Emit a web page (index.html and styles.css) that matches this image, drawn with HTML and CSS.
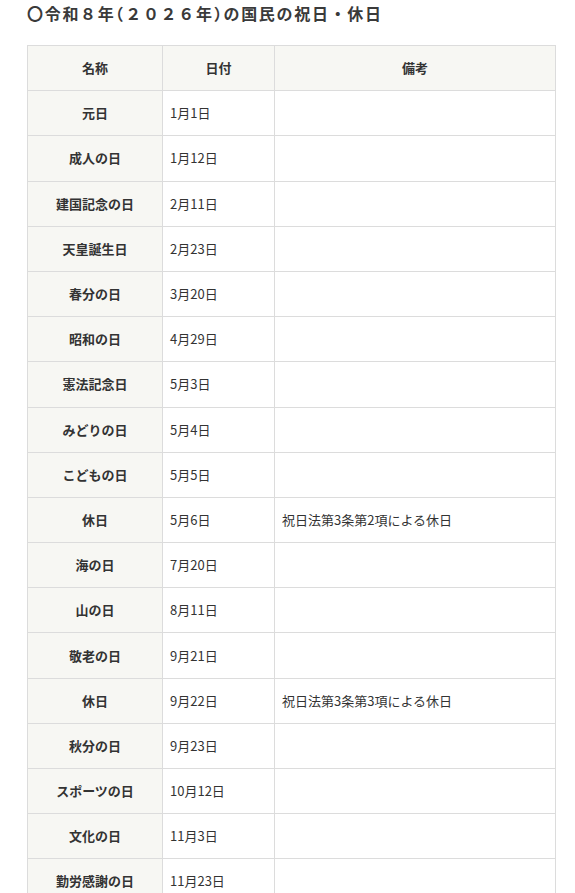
FILE: index.html
```html
<!DOCTYPE html>
<html lang="ja">
<head>
<meta charset="utf-8">
<link rel="stylesheet" href="styles.css">
</head>
<body>
<div class="page">
<h2 class="title">〇令和８年<span class="paren">（</span>２０２６年<span class="paren">）</span>の国民の祝日・休日</h2>
<table class="holidays">
<colgroup><col class="c-name"><col class="c-date"><col class="c-note"></colgroup>
<thead>
<tr><th>名称</th><th>日付</th><th>備考</th></tr>
</thead>
<tbody>
<tr><th>元日</th><td>1月1日</td><td></td></tr>
<tr><th>成人の日</th><td>1月12日</td><td></td></tr>
<tr><th>建国記念の日</th><td>2月11日</td><td></td></tr>
<tr><th>天皇誕生日</th><td>2月23日</td><td></td></tr>
<tr><th>春分の日</th><td>3月20日</td><td></td></tr>
<tr><th>昭和の日</th><td>4月29日</td><td></td></tr>
<tr><th>憲法記念日</th><td>5月3日</td><td></td></tr>
<tr><th>みどりの日</th><td>5月4日</td><td></td></tr>
<tr><th>こどもの日</th><td>5月5日</td><td></td></tr>
<tr><th>休日</th><td>5月6日</td><td>祝日法第3条第2項による休日</td></tr>
<tr><th>海の日</th><td>7月20日</td><td></td></tr>
<tr><th>山の日</th><td>8月11日</td><td></td></tr>
<tr><th>敬老の日</th><td>9月21日</td><td></td></tr>
<tr><th>休日</th><td>9月22日</td><td>祝日法第3条第3項による休日</td></tr>
<tr><th>秋分の日</th><td>9月23日</td><td></td></tr>
<tr><th>スポーツの日</th><td>10月12日</td><td></td></tr>
<tr><th>文化の日</th><td>11月3日</td><td></td></tr>
<tr><th>勤労感謝の日</th><td>11月23日</td><td></td></tr>
</tbody>
</table>
</div>
</body>
</html>
```

FILE: styles.css
```css
html, body {
  margin: 0;
  padding: 0;
  background: #fff;
}
body {
  font-family: "Noto Sans CJK JP", "Noto Sans", sans-serif;
  color: #333;
}
.page {
  padding: 0 20px 0 27px;
}
.title {
  margin: 0;
  padding-top: 3px;
  height: 45px;
  box-sizing: border-box;
  font-size: 16px;
  line-height: 20px;
  font-weight: bold;
  letter-spacing: 1.7px;
  color: #3a3a3a;
}
.paren {
  font-feature-settings: "halt";
}
.holidays {
  width: 528px;
  border-collapse: collapse;
  table-layout: fixed;
  font-size: 13px;
}
.c-name { width: 135px; }
.c-date { width: 112px; }
.c-note { width: 281px; }
.holidays th,
.holidays td {
  border: 1px solid #dcdcdc;
  height: 44.2px;
  padding: 0 7px;
  line-height: 18px;
  box-sizing: border-box;
}
.holidays tr {
  height: 45.2px;
}
.holidays th {
  background: #f7f7f3;
  font-weight: bold;
  text-align: center;
}
.holidays td {
  text-align: left;
}
```
